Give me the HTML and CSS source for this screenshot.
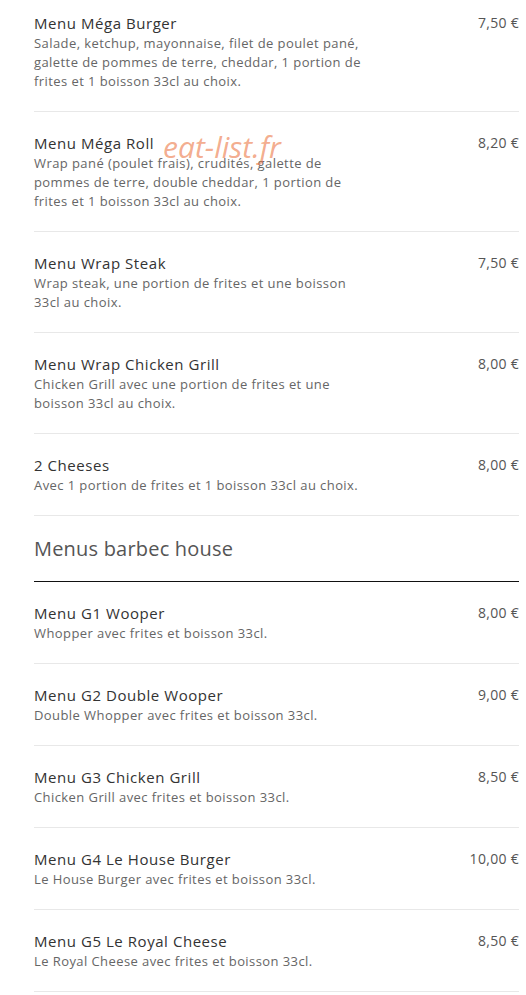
FILE: index.html
```html
<!DOCTYPE html>
<html lang="fr">
<head>
    <meta charset="UTF-8">
    <meta name="viewport" content="width=device-width, initial-scale=1.0">
    <title>Menus</title>
    <link rel="stylesheet" href="styles.css">
</head>
<body>

<div class="menu">

    <div class="item">
        <div class="info">
            <div class="name">Menu Méga Burger</div>
            <div class="desc">Salade, ketchup, mayonnaise, filet de poulet pané, galette de pommes de terre, cheddar, 1 portion de frites et 1 boisson 33cl au choix.</div>
        </div>
        <div class="price">7,50 €</div>
    </div>

    <div class="item">
        <div class="info">
            <div class="name">Menu Méga Roll</div>
            <div class="desc">Wrap pané (poulet frais), crudités, galette de pommes de terre, double cheddar, 1 portion de frites et 1 boisson 33cl au choix.</div>
        </div>
        <div class="price">8,20 €</div>
    </div>

    <div class="item">
        <div class="info">
            <div class="name">Menu Wrap Steak</div>
            <div class="desc">Wrap steak, une portion de frites et une boisson 33cl au choix.</div>
        </div>
        <div class="price">7,50 €</div>
    </div>

    <div class="item">
        <div class="info">
            <div class="name">Menu Wrap Chicken Grill</div>
            <div class="desc">Chicken Grill avec une portion de frites et une boisson 33cl au choix.</div>
        </div>
        <div class="price">8,00 €</div>
    </div>

    <div class="item">
        <div class="info">
            <div class="name">2 Cheeses</div>
            <div class="desc">Avec 1 portion de frites et 1 boisson 33cl au choix.</div>
        </div>
        <div class="price">8,00 €</div>
    </div>

    <!-- second category -->
    <h3 class="category">Menus barbec house</h3>

    <div class="item">
        <div class="info">
            <div class="name">Menu G1 Wooper</div>
            <div class="desc">Whopper avec frites et boisson 33cl.</div>
        </div>
        <div class="price">8,00 €</div>
    </div>

    <div class="item">
        <div class="info">
            <div class="name">Menu G2 Double Wooper</div>
            <div class="desc">Double Whopper avec frites et boisson 33cl.</div>
        </div>
        <div class="price">9,00 €</div>
    </div>

    <div class="item">
        <div class="info">
            <div class="name">Menu G3 Chicken Grill</div>
            <div class="desc">Chicken Grill avec frites et boisson 33cl.</div>
        </div>
        <div class="price">8,50 €</div>
    </div>

    <div class="item">
        <div class="info">
            <div class="name">Menu G4 Le House Burger</div>
            <div class="desc">Le House Burger avec frites et boisson 33cl.</div>
        </div>
        <div class="price">10,00 €</div>
    </div>

    <div class="item">
        <div class="info">
            <div class="name">Menu G5 Le Royal Cheese</div>
            <div class="desc">Le Royal Cheese avec frites et boisson 33cl.</div>
        </div>
        <div class="price">8,50 €</div>
    </div>

</div>

<div class="watermark">eat-list.fr</div>

</body>
</html>
```

FILE: styles.css
```css
body {
    font-family: "Open Sans", Arial, sans-serif;
    background-color: white;
    margin: 0;
    position: relative;
}

/* page is scrolled a little, first divider is off screen */
.menu {
    margin-top: -8px;
    padding: 0 7px 0 34px;
}

.item {
    display: flex;
    justify-content: space-between;
    align-items: flex-start;
    padding: 20px 0;
    border-bottom: 1px solid #e8e8e8;
}

.info {
    width: 334px;
}

.name {
    font-size: 15px;
    line-height: 22px;
    letter-spacing: 0.55px;
    color: #333;
}

.desc {
    font-size: 13px;
    line-height: 19px;
    letter-spacing: 0.42px;
    color: #666;
}

.price {
    font-size: 14px;
    line-height: 22px;
    letter-spacing: 0.3px;
    color: #555;
    white-space: nowrap;
}

.category {
    margin: 0;
    padding: 19px 0 18px 0;
    font-size: 20px;
    line-height: 28px;
    font-weight: normal;
    letter-spacing: 0.2px;
    color: #555;
    border-bottom: 1px solid #111;
}

/* site watermark over the list */
.watermark {
    position: absolute;
    left: 163px;
    top: 126px;
    font-size: 30px;
    font-style: italic;
    color: rgba(236, 120, 70, 0.62);
    pointer-events: none;
}
```
